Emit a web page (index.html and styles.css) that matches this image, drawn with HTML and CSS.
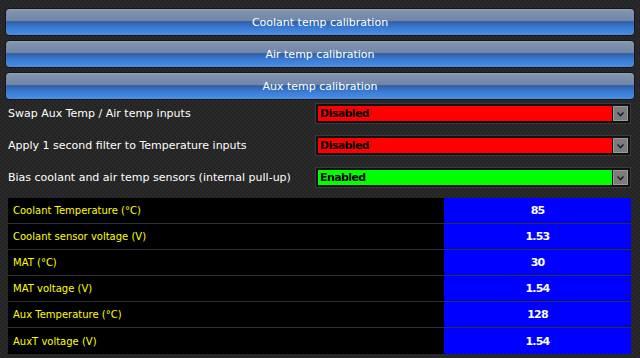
FILE: index.html
```html
<!DOCTYPE html>
<html>
<head>
<meta charset="utf-8">
<link rel="stylesheet" href="styles.css">
</head>
<body>
<div class="page">
  <div class="buttons">
    <div class="btn">Coolant temp calibration</div>
    <div class="btn">Air temp calibration</div>
    <div class="btn">Aux temp calibration</div>
  </div>
  <div class="settings">
    <div class="setting">
      <span class="label">Swap Aux Temp / Air temp inputs</span>
      <div class="select"><span class="value red">Disabled</span><span class="arrow"><svg width="9" height="6" viewBox="0 0 9 6"><path d="M1.5 1.5 L4.5 4.5 L7.5 1.5" fill="none" stroke="#222" stroke-width="1.6"/></svg></span></div>
    </div>
    <div class="setting">
      <span class="label">Apply 1 second filter to Temperature inputs</span>
      <div class="select"><span class="value red">Disabled</span><span class="arrow"><svg width="9" height="6" viewBox="0 0 9 6"><path d="M1.5 1.5 L4.5 4.5 L7.5 1.5" fill="none" stroke="#222" stroke-width="1.6"/></svg></span></div>
    </div>
    <div class="setting">
      <span class="label">Bias coolant and air temp sensors (internal pull-up)</span>
      <div class="select"><span class="value green">Enabled</span><span class="arrow"><svg width="9" height="6" viewBox="0 0 9 6"><path d="M1.5 1.5 L4.5 4.5 L7.5 1.5" fill="none" stroke="#222" stroke-width="1.6"/></svg></span></div>
    </div>
  </div>
  <div class="table">
    <div class="row"><span class="name">Coolant Temperature (°C)</span><span class="val">85</span></div>
    <div class="row"><span class="name">Coolant sensor voltage (V)</span><span class="val">1.53</span></div>
    <div class="row"><span class="name">MAT (°C)</span><span class="val">30</span></div>
    <div class="row"><span class="name">MAT voltage (V)</span><span class="val">1.54</span></div>
    <div class="row"><span class="name">Aux Temperature (°C)</span><span class="val">128</span></div>
    <div class="row"><span class="name">AuxT voltage (V)</span><span class="val">1.54</span></div>
  </div>
</div>
</body>
</html>
```
FILE: styles.css
```css
html, body {
  margin: 0;
  padding: 0;
}
body {
  width: 640px;
  height: 358px;
  overflow: hidden;
  background-color: #2a2a2a;
  background-image:
    linear-gradient(45deg, #242424 25%, transparent 25%, transparent 75%, #242424 75%),
    linear-gradient(45deg, #242424 25%, transparent 25%, transparent 75%, #242424 75%);
  background-size: 4px 4px;
  background-position: 0 0, 2px 2px;
  font-family: "DejaVu Sans", Verdana, sans-serif;
}
.page {
  padding: 8px 5px 0 5px;
  display: flex;
  flex-direction: column;
}
.buttons {
  display: flex;
  flex-direction: column;
  gap: 4px;
}
.btn {
  height: 26px;
  border: 1px solid #151515;
  border-radius: 4px;
  background: linear-gradient(to bottom,
    #8497b0 0%, #6f86a7 45%, #3c66a6 48%, #3063ac 52%, #3b7bd4 72%, #4a8ee6 100%);
  color: #fff;
  font-size: 11px;
  display: flex;
  align-items: center;
  justify-content: center;
  box-shadow: inset 0 1px 0 rgba(255,255,255,0.12);
}
.settings {
  display: flex;
  flex-direction: column;
  gap: 11px;
  padding: 3px 4px 0 3px;
}
.setting {
  display: flex;
  align-items: center;
  justify-content: space-between;
  height: 21px;
}
.label {
  color: #fff;
  font-size: 11px;
  white-space: nowrap;
}
.select {
  flex-shrink: 0;
  width: 316px;
  height: 21px;
  box-sizing: border-box;
  background: #111;
  border: 1px solid #3a3a3a;
  padding: 2px;
  display: flex;
  gap: 1px;
}
.value {
  flex: 1;
  font-weight: bold;
  font-size: 11px;
  letter-spacing: -0.6px;
  color: #000;
  display: flex;
  align-items: center;
  padding-left: 2px;
}
.red { background: #ff0000; }
.green { background: #00ff00; }
.arrow {
  width: 15px;
  background: #7b7b7b;
  border: 1px solid #9a9a9a;
  box-sizing: border-box;
  display: flex;
  align-items: center;
  justify-content: center;
}
.table {
  margin: 10px 4px 0 3px;
  display: flex;
  flex-direction: column;
}
.row {
  height: 26px;
  box-sizing: border-box;
  border-bottom: 1px solid #303030;
  display: flex;
  background: #000;
}
.row:last-child { border-bottom: none; }
.name {
  flex: 1;
  color: #ffff00;
  font-size: 10px;
  display: flex;
  align-items: center;
  padding-left: 5px;
}
.val {
  width: 187px;
  background: #0000ff;
  color: #fff;
  font-weight: bold;
  font-size: 11px;
  letter-spacing: -0.8px;
  display: flex;
  align-items: center;
  justify-content: center;
}
```
